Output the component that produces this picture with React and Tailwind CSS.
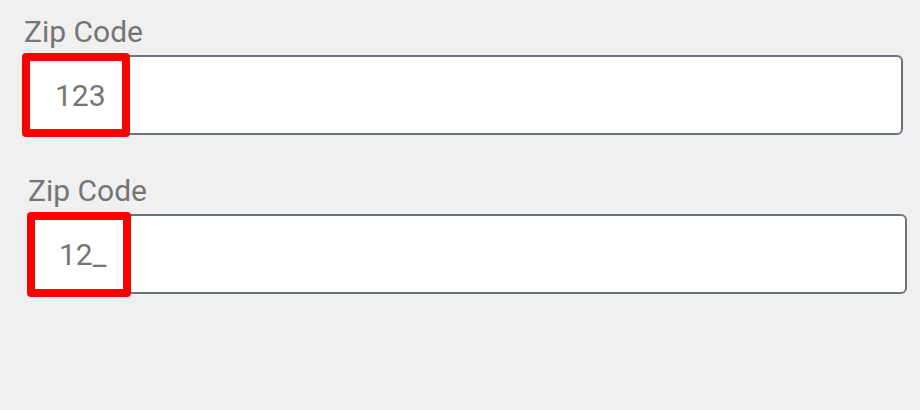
import React from 'react'

const ZipField = ({ value, className, boxClass }) => {
  return (
    <div className={className}>
      <label className="block text-[30px] leading-[35px] text-[#757575]">Zip Code</label>
      <div className="relative mt-[6px]">
        <input
          readOnly
          value={value}
          className="block w-full h-[80px] bg-white border-2 border-[#6b7280] rounded-[6px] pl-[29px] text-[30px] text-[#757575] outline-none"
        />
        {/* highlight around the masked value */}
        <div className={`absolute border-[8px] border-[#ff0000] rounded-[4px] pointer-events-none ${boxClass}`}></div>
      </div>
    </div>
  )
}

const App = () => {
  return (
    <div className="bg-[#f0f0f0] w-[920px] h-[410px] pt-[14px] font-['Roboto',sans-serif]">
      <ZipField
        value="123"
        className="ml-[24px] w-[879px]"
        boxClass="-left-[2px] -top-[2px] w-[108px] h-[84px]"
      />
      <ZipField
        value="12_"
        className="ml-[28px] w-[879px] mt-[38px]"
        boxClass="-left-[1px] -top-[2px] w-[104px] h-[85px]"
      />
    </div>
  )
}

export default App
